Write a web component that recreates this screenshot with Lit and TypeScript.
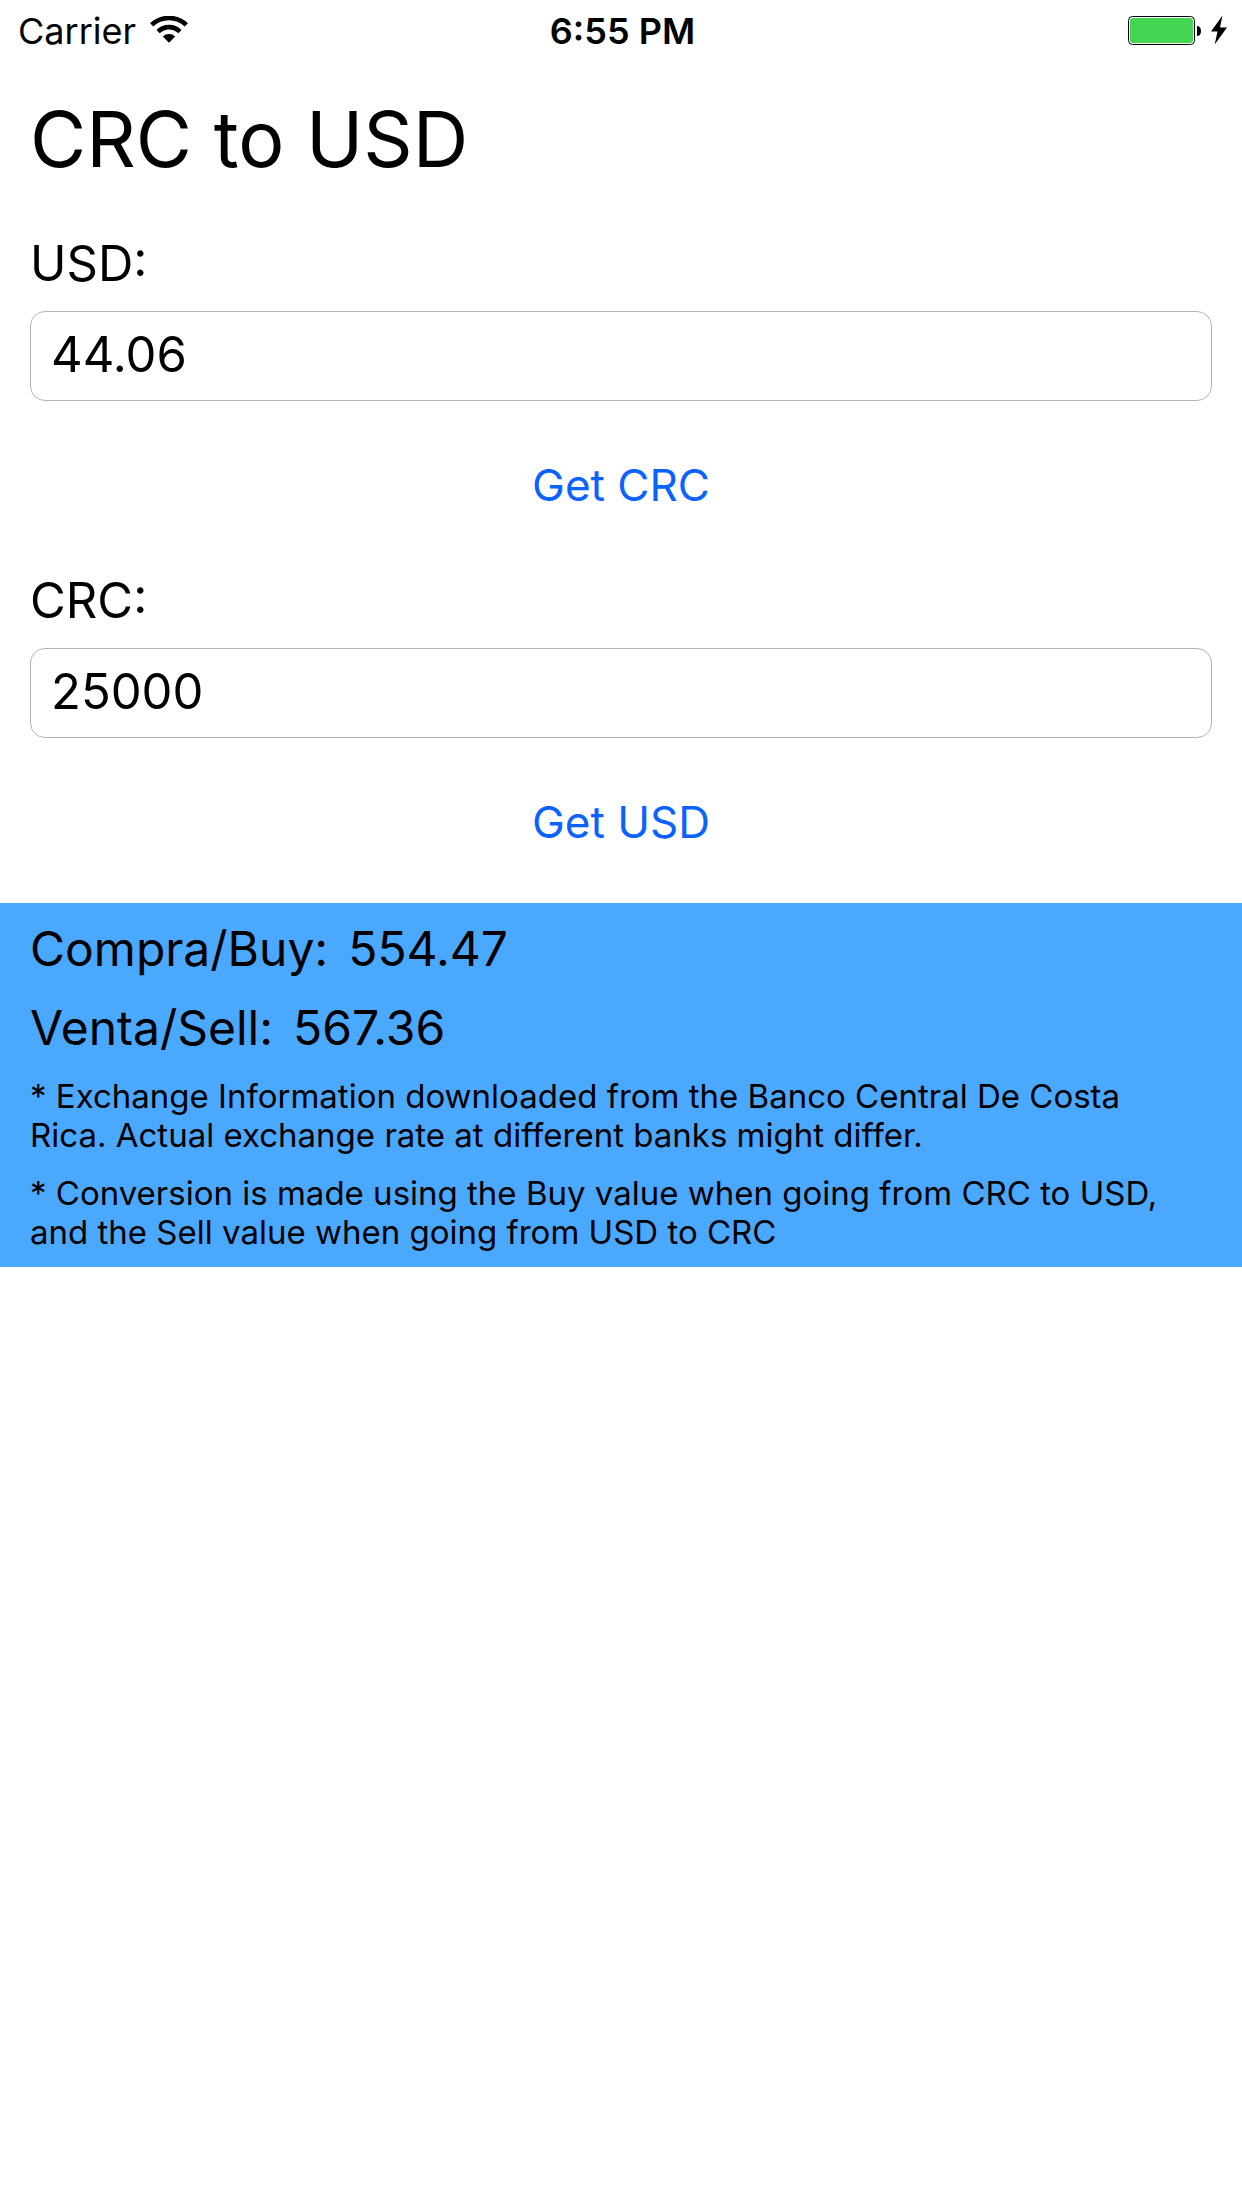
import { LitElement, html, css } from "lit";
import { customElement, property, state } from "lit/decorators.js";

@customElement("status-bar")
export class StatusBar extends LitElement {
  static styles = css`
    :host {
      display: grid;
      grid-template-columns: 1fr auto 1fr;
      align-items: center;
      height: 62px;
      padding: 0 15px 0 18px;
      font-size: 36px;
      line-height: 62px;
    }
    .network,
    .power {
      display: flex;
      align-items: center;
    }
    .network {
      gap: 14px;
    }
    .power {
      justify-content: flex-end;
      gap: 10px;
    }
    .time {
      font-weight: 600;
    }
    svg {
      display: block;
    }
  `;

  render() {
    return html`
      <div class="network">
        <span>Carrier</span>
        <svg width="38" height="30" viewBox="0 0 38 30" aria-label="Wi-Fi">
          <g fill="none" stroke="#000" stroke-width="4.6">
            <path d="M1.7 8.9a25 25 0 0 1 34.6 0" />
            <path d="M8.1 15.6a15.6 15.6 0 0 1 21.8 0" />
          </g>
          <path d="M19 26.8L12.8 20.4a9 9 0 0 1 12.4 0z" />
        </svg>
      </div>
      <span class="time">6:55 PM</span>
      <div class="power">
        <svg width="73" height="32" viewBox="0 0 73 32" aria-label="Battery full">
          <rect x="0.5" y="1.5" width="66" height="28" rx="4" fill="#fff" stroke="#000" />
          <rect x="2" y="3" width="63" height="25" rx="3" fill="#44d553" />
          <path d="M69 11c2.6 0 4 2 4 5s-1.400 5-4 5z" />
        </svg>
        <svg width="16" height="32" viewBox="0 0 16 32" aria-label="Charging">
          <path d="M11.500 0.500L0 16.500h6.500L3.700 29.500L16 12.500H9z" />
        </svg>
      </div>
    `;
  }
}

@customElement("currency-field")
export class CurrencyField extends LitElement {
  @property() label = "";
  @property() value = "";
  @property() action = "";

  static styles = css`
    :host {
      display: flex;
      flex-direction: column;
    }
    .label {
      align-self: flex-start;
      font-size: 49px;
      line-height: 62px;
      margin-bottom: 16px;
    }
    .input {
      box-sizing: border-box;
      width: 100%;
      height: 90px;
      padding: 0 20px 4px;
      border: 1px solid #b4b4b4;
      border-radius: 15px;
      background: #fff;
      color: #000;
      font: inherit;
      font-size: 49px;
      outline: none;
    }
    .action {
      align-self: center;
      height: 85px;
      margin-top: 42px;
      padding: 0 0 2px;
      border: 0;
      background: none;
      color: #0a63ff;
      font: inherit;
      font-size: 44px;
      cursor: pointer;
    }
  `;

  private onInput(e: Event) {
    this.value = (e.target as HTMLInputElement).value;
  }

  private onClick() {
    this.dispatchEvent(new CustomEvent("convert", { detail: this.value }));
  }

  render() {
    return html`
      <label class="label" for="amount">${this.label}:</label>
      <input
        class="input"
        id="amount"
        type="text"
        inputmode="decimal"
        .value=${this.value}
        @input=${this.onInput}
      />
      <button class="action" type="button" @click=${this.onClick}>${this.action}</button>
    `;
  }
}

@customElement("app-root")
export class AppRoot extends LitElement {
  @state() private usd = "44.06";
  @state() private crc = "25000";

  private readonly buy = 554.47;
  private readonly sell = 567.36;

  static styles = css`
    :host {
      display: block;
      min-height: 100vh;
      background: #fff;
      color: #000;
      font-family: Inter, "Liberation Sans", sans-serif;
    }
    .converter {
      display: flex;
      flex-direction: column;
      padding: 29px 30px 38px;
    }
    .title {
      margin: 0 0 46px;
      font-size: 77px;
      font-weight: 400;
      line-height: 96px;
    }
    .fields {
      display: flex;
      flex-direction: column;
      gap: 42px;
    }
    .rates {
      display: flex;
      flex-direction: column;
      gap: 19px;
      padding: 16px 30px 15px;
      background: #4ba8ff;
    }
    .rate {
      display: flex;
      gap: 20px;
      font-size: 48px;
      line-height: 60px;
    }
    .note {
      margin: 0;
      padding-right: 30px;
      font-size: 33px;
      line-height: 39px;
    }
  `;

  private toCrc(e: CustomEvent<string>) {
    this.usd = e.detail;
    this.crc = (Number(e.detail) * this.sell).toFixed(2);
  }

  private toUsd(e: CustomEvent<string>) {
    this.crc = e.detail;
    this.usd = (Number(e.detail) / this.buy).toFixed(2);
  }

  render() {
    return html`
      <status-bar></status-bar>
      <main>
        <section class="converter">
          <h1 class="title">CRC to USD</h1>
          <div class="fields">
            <currency-field
              label="USD"
              action="Get CRC"
              .value=${this.usd}
              @convert=${this.toCrc}
            ></currency-field>
            <currency-field
              label="CRC"
              action="Get USD"
              .value=${this.crc}
              @convert=${this.toUsd}
            ></currency-field>
          </div>
        </section>
        <section class="rates">
          <div class="rate"><span>Compra/Buy:</span><span>${this.buy}</span></div>
          <div class="rate"><span>Venta/Sell:</span><span>${this.sell}</span></div>
          <p class="note">
            * Exchange Information downloaded from the Banco Central De Costa Rica. Actual
            exchange rate at different banks might differ.
          </p>
          <p class="note">
            * Conversion is made using the Buy value when going from CRC to USD, and the Sell
            value when going from USD to CRC
          </p>
        </section>
      </main>
    `;
  }
}
